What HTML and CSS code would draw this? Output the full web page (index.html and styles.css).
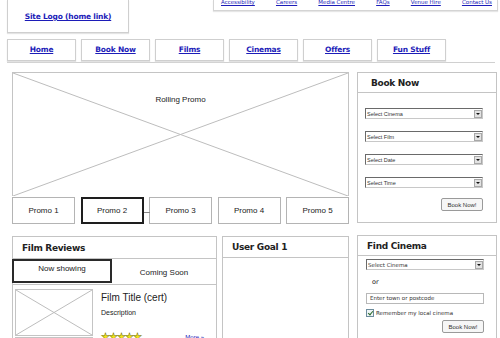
FILE: index.html
```html
<!DOCTYPE html>
<html>
<head>
  <meta charset="utf-8">
  <title>Cinema home wireframe</title>
  <link rel="stylesheet" href="styles.css">
</head>
<body>

<!-- header -->
<div class="top">
  <div class="logo"><a href="#">Site Logo (home link)</a></div>
  <div class="util">
    <a href="#">Accessibility</a>
    <a href="#">Careers</a>
    <a href="#">Media Centre</a>
    <a href="#">FAQs</a>
    <a href="#">Venue Hire</a>
    <a href="#">Contact Us</a>
  </div>
</div>

<div class="nav">
  <a class="nav-item" href="#">Home</a>
  <a class="nav-item" href="#">Book Now</a>
  <a class="nav-item" href="#">Films</a>
  <a class="nav-item" href="#">Cinemas</a>
  <a class="nav-item" href="#">Offers</a>
  <a class="nav-item" href="#">Fun Stuff</a>
</div>

<!-- promo + booking -->
<div class="row row1">
  <div class="promo">
    <div class="promo-img">
      <svg class="cross" viewBox="0 0 100 100" preserveAspectRatio="none">
        <line x1="0" y1="0" x2="100" y2="100"/>
        <line x1="100" y1="0" x2="0" y2="100"/>
      </svg>
      <span class="promo-label">Rolling Promo</span>
    </div>
    <div class="promo-tabs">
      <div class="promo-tab">Promo 1</div>
      <div class="promo-tab active">Promo 2</div>
      <div class="promo-tab">Promo 3</div>
      <div class="promo-tab">Promo 4</div>
      <div class="promo-tab">Promo 5</div>
    </div>
  </div>

  <div class="panel book">
    <div class="panel-head">Book Now</div>
    <div class="book-body">
      <div class="select"><span>Select Cinema</span><i class="arrow"></i></div>
      <div class="select"><span>Select Film</span><i class="arrow"></i></div>
      <div class="select"><span>Select Date</span><i class="arrow"></i></div>
      <div class="select"><span>Select Time</span><i class="arrow"></i></div>
      <div class="btn-row"><button class="btn">Book Now!</button></div>
    </div>
  </div>
</div>

<!-- lower row -->
<div class="row row2">
  <div class="panel reviews">
    <div class="panel-head">Film Reviews</div>
    <div class="tabs">
      <div class="tab current">Now showing</div>
      <div class="tab">Coming Soon</div>
    </div>
    <div class="film">
      <div class="film-left">
        <div class="thumb">
          <svg class="cross" viewBox="0 0 100 100" preserveAspectRatio="none">
            <line x1="0" y1="0" x2="100" y2="100"/>
            <line x1="100" y1="0" x2="0" y2="100"/>
          </svg>
        </div>
        <div class="mini-btns"><span>Find Cinema</span><span>Book Now</span></div>
      </div>
      <div class="film-info">
        <div class="film-title">Film Title (cert)</div>
        <div class="film-desc">Description</div>
        <div class="film-foot">
          <span class="stars">★★★★★</span>
          <a href="#" class="more">More »</a>
        </div>
      </div>
    </div>
  </div>

  <div class="panel goal">
    <div class="panel-head">User Goal 1</div>
  </div>

  <div class="panel find">
    <div class="panel-head">Find Cinema</div>
    <div class="find-body">
      <div class="select wide"><span>Select Cinema</span><i class="arrow"></i></div>
      <div class="or">or</div>
      <div class="field">Enter town or postcode</div>
      <label class="remember"><i class="check"></i>Remember my local cinema</label>
      <div class="btn-row"><button class="btn">Book Now!</button></div>
    </div>
  </div>
</div>

</body>
</html>
```

FILE: styles.css
```css
body {
  margin: 0;
  width: 500px;
  height: 338px;
  overflow: hidden;
  background: #fff;
  font-family: "Liberation Sans", Arial, sans-serif;
  color: #222;
}
a {
  color: #1c1cb8;
}

/* header */
.top {
  display: flex;
  height: 34px;
}
.logo {
  margin-left: 7px;
  width: 122px;
  height: 33px;
  box-sizing: border-box;
  border: 1px solid #cfcfcf;
  border-top: 0;
  box-shadow: 0 1px 1px #e4e4e4;
  display: flex;
  align-items: center;
  justify-content: center;
  padding-top: 1px;
  font-family: "DejaVu Sans", Verdana, sans-serif;
  font-size: 7.5px;
  font-weight: bold;
  letter-spacing: -0.2px;
}
.util {
  margin-left: auto;
  margin-right: 2px;
  width: 285px;
  height: 11px;
  box-sizing: border-box;
  border: 1px solid #d4d4d4;
  border-top: 0;
  box-shadow: 0 1px 1px #e6e6e6;
  display: flex;
  justify-content: space-between;
  padding: 0 5px 0 7px;
  font-family: "DejaVu Sans", Verdana, sans-serif;
  font-size: 5.5px;
  line-height: 6px;
}
.util a {
  margin-top: -1px;
}

/* nav */
.nav {
  display: flex;
  gap: 5px;
  margin: 5px 5px 0 7px;
  padding-bottom: 1px;
  border-bottom: 1px solid #d0d0d0;
}
.nav-item {
  width: 69px;
  height: 22px;
  box-sizing: border-box;
  border: 1px solid #cfcfcf;
  box-shadow: 0 1px 1px #e2e2e2;
  display: flex;
  align-items: center;
  justify-content: center;
  padding-bottom: 2px;
  font-family: "DejaVu Sans", Verdana, sans-serif;
  font-size: 7.5px;
  font-weight: bold;
  letter-spacing: -0.2px;
}

/* rows */
.row {
  display: flex;
  padding-left: 12px;
}
.row1 {
  margin-top: 9px;
  gap: 8px;
}
.row2 {
  margin-top: 12px;
}

.panel {
  box-sizing: border-box;
  border: 1px solid #c4c4c4;
}
.panel-head {
  height: 20px;
  box-sizing: border-box;
  border-bottom: 1px solid #c4c4c4;
  display: flex;
  align-items: center;
  padding-left: 9px;
  font-family: "DejaVu Sans", Verdana, sans-serif;
  font-size: 9px;
  font-weight: bold;
  letter-spacing: -0.3px;
}

/* promo */
.promo {
  width: 337px;
}
.promo-img {
  position: relative;
  height: 124px;
  box-sizing: border-box;
  border: 1px solid #c4c4c4;
  border-bottom: 0;
  display: flex;
  justify-content: center;
  padding-top: 22px;
}
.cross {
  position: absolute;
  left: 0;
  top: 0;
  width: 100%;
  height: 100%;
}
.cross line {
  stroke: #bdbdbd;
  stroke-width: 1;
  vector-effect: non-scaling-stroke;
}
.promo-label {
  position: relative;
  font-size: 8px;
  height: 10px;
  background: #fff;
}
.promo-tabs {
  display: flex;
  justify-content: space-between;
  margin-top: 1px;
}
.promo-tab {
  width: 63px;
  height: 27px;
  box-sizing: border-box;
  border: 1px solid #b4b4b4;
  display: flex;
  align-items: center;
  justify-content: center;
  font-size: 8px;
}
.promo-tab.active {
  position: relative;
  border: 2px solid #1e1e1e;
}
.promo-tab.active::after {
  content: "";
  position: absolute;
  right: -8px;
  top: 13px;
  width: 6px;
  border-top: 1px solid #888;
}

/* book now */
.book {
  width: 140px;
  height: 151px;
}
.book .panel-head {
  padding-left: 13px;
}
.book-body {
  padding: 15px 13px 0 7px;
}
.select {
  height: 11px;
  box-sizing: border-box;
  border: 1px solid #c8c8c8;
  border-top-color: #6a6a6a;
  border-left-color: #6a6a6a;
  display: flex;
  align-items: center;
  justify-content: space-between;
  padding-left: 1px;
  margin-bottom: 12px;
  font-size: 5.5px;
  color: #333;
}
.arrow {
  width: 8px;
  height: 8px;
  margin-right: 0;
  box-sizing: border-box;
  background: #e2e2e2;
  border: 1px solid #a8a8a8;
  display: flex;
  align-items: center;
  justify-content: center;
}
.arrow::before {
  content: "";
  border-left: 2px solid transparent;
  border-right: 2px solid transparent;
  border-top: 2px solid #111;
}
.btn-row {
  display: flex;
  justify-content: flex-end;
}
.book .btn-row {
  margin-top: -2px;
}
.btn {
  width: 42px;
  height: 13px;
  padding: 0;
  background: #f6f6f6;
  border: 1px solid #9a9a9a;
  border-radius: 2px;
  font-family: "Liberation Sans", Arial, sans-serif;
  font-size: 6px;
  color: #333;
}

/* film reviews */
.reviews {
  width: 205px;
  height: 120px;
}
.reviews .panel-head {
  height: 22px;
}
.tabs {
  display: flex;
  height: 25px;
  margin-left: -1px;
  border-bottom: 1px solid #c4c4c4;
}
.tab {
  flex: 1;
  display: flex;
  justify-content: center;
  padding-top: 9px;
  font-size: 8px;
}
.tab.current {
  flex: none;
  width: 100px;
  height: 24px;
  box-sizing: border-box;
  border: 2px solid #2a2a2a;
  padding-top: 3px;
}
.film {
  display: flex;
  gap: 8px;
  padding: 4px 0 0 2px;
}
.film-left {
  width: 78px;
}
.thumb {
  position: relative;
  height: 45px;
  border: 1px solid #c4c4c4;
}
.mini-btns {
  display: flex;
  margin-top: 1px;
  border: 1px solid #c4c4c4;
  height: 6px;
  font-size: 3.5px;
  color: #666;
}
.mini-btns span {
  flex: 1;
  text-align: center;
  line-height: 6px;
}
.mini-btns span + span {
  border-left: 1px solid #c4c4c4;
}
.film-info {
  flex: 1;
  padding-top: 3px;
}
.film-title {
  font-size: 10px;
}
.film-desc {
  margin-top: 6px;
  font-size: 7px;
}
.film-foot {
  display: flex;
  justify-content: space-between;
  align-items: center;
  margin-top: 15px;
  padding-right: 12px;
}
.stars {
  font-size: 10px;
  color: #f2e218;
  letter-spacing: -1px;
  -webkit-text-stroke: 0.5px #7a7a10;
}
.more {
  font-size: 6px;
  text-decoration: none;
}

/* user goal */
.goal {
  width: 127px;
  height: 120px;
  margin-left: 5px;
}
.goal .panel-head {
  height: 21px;
}

/* find cinema */
.find {
  width: 140px;
  height: 120px;
  margin-left: 8px;
  margin-top: -1px;
}
.find .panel-head {
  padding-left: 9px;
}
.find-body {
  padding: 3px 12px 0 8px;
}
.select.wide {
  margin-bottom: 0;
  font-family: "DejaVu Sans", Verdana, sans-serif;
  font-size: 5.5px;
}
.or {
  margin: 8px 0 0 6px;
  font-family: "DejaVu Sans", Verdana, sans-serif;
  font-size: 6.5px;
  height: 10px;
}
.field {
  margin-top: 5px;
  height: 11px;
  box-sizing: border-box;
  border: 1px solid #b8b8b8;
  padding-left: 3px;
  font-family: "DejaVu Sans", Verdana, sans-serif;
  font-size: 5.5px;
  line-height: 9px;
  color: #333;
}
.remember {
  display: flex;
  align-items: center;
  gap: 2px;
  margin-top: 5px;
  font-family: "DejaVu Sans", Verdana, sans-serif;
  font-size: 5.5px;
  color: #333;
}
.check {
  width: 8px;
  height: 8px;
  box-sizing: border-box;
  border: 1px solid #6c8c9c;
  background: #eef4f6;
  position: relative;
}
.check::after {
  content: "";
  position: absolute;
  left: 2px;
  top: 0;
  width: 2px;
  height: 4px;
  border-right: 1px solid #2a6a2a;
  border-bottom: 1px solid #2a6a2a;
  transform: rotate(40deg);
}
.find .btn-row {
  margin-top: 3px;
}
```
